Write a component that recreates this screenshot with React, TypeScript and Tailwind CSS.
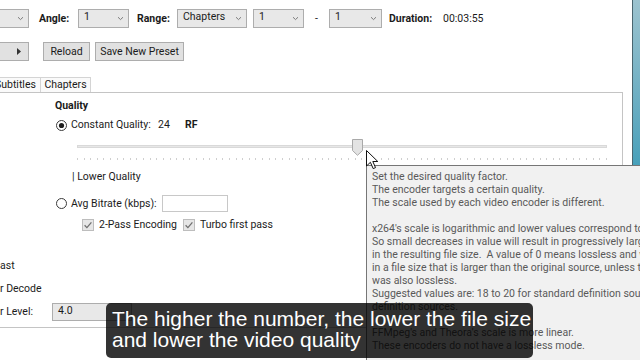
import React from "react";

const Chevron = () => (
  <svg width="7" height="5" viewBox="0 0 7 5" className="shrink-0">
    <path d="M1 1.2 L3.5 3.6 L6 1.2" fill="none" stroke="#7c7c7c" strokeWidth="1" />
  </svg>
);

function Dropdown({ className, text }: { className: string; text?: string }) {
  return (
    <div
      className={`h-[19px] shrink-0 flex items-center justify-between border border-[#adadad] bg-[#e8e8e8] pl-[5px] pr-[4px] ${className}`}
    >
      <span className="leading-[12px] pb-[3px]">{text ?? ""}</span>
      <Chevron />
    </div>
  );
}

function Button({ className, children }: { className: string; children: React.ReactNode }) {
  return (
    <div
      className={`h-[19px] shrink-0 flex items-center justify-center border border-[#adadad] bg-[#e1e1e1] ${className}`}
    >
      {children}
    </div>
  );
}

const Radio = ({ checked }: { checked?: boolean }) => (
  <svg width="11" height="11" viewBox="0 0 11 11" className="shrink-0">
    <circle cx="5.5" cy="5.5" r="5" fill="#fff" stroke="#3a3a3a" strokeWidth="1" />
    {checked && <circle cx="5.5" cy="5.5" r="2.6" fill="#1e1e1e" />}
  </svg>
);

const Check = () => (
  <svg width="12" height="12" viewBox="0 0 12 12" className="shrink-0">
    <rect x="0.5" y="0.5" width="11" height="11" fill="#e6e6e6" stroke="#bdbdbd" />
    <path d="M2.6 6.2 L4.9 8.6 L9.4 3.3" fill="none" stroke="#707070" strokeWidth="1.3" />
  </svg>
);

const ticks = Array.from({ length: 81 }, (_, i) => i);

const tooltipText = `Set the desired quality factor.
The encoder targets a certain quality.
The scale used by each video encoder is different.

x264's scale is logarithmic and lower values correspond to higher quality.
So small decreases in value will result in progressively larger increases
in the resulting file size.  A value of 0 means lossless and will result
in a file size that is larger than the original source, unless the source
was also lossless.
Suggested values are: 18 to 20 for standard definition sources and 20 to 23 for high
definition sources.

FFMpeg's and Theora's scale is more linear.
These encoders do not have a lossless mode.`;

export default function App() {
  return (
    <div className="w-[640px] h-[360px] overflow-hidden relative bg-white flex font-['Roboto',sans-serif] text-[10.5px] text-[#1b1b1b]">
      <div className="w-[632px] h-full shrink-0 flex flex-col overflow-hidden">
        {/* Row 1 */}
        <div className="mt-[9px] h-[19px] flex items-center shrink-0">
          <Dropdown className="-ml-[30px] w-[59px]" />
          <span className="ml-[10px] w-[39px] font-bold">Angle:</span>
          <Dropdown className="w-[51px]" text="1" />
          <span className="ml-[8px] w-[40px] font-bold">Range:</span>
          <Dropdown className="w-[70px]" text="Chapters" />
          <Dropdown className="ml-[6px] w-[51px]" text="1" />
          <span className="w-[25px] text-center">-</span>
          <Dropdown className="w-[53px]" text="1" />
          <span className="ml-[7px] w-[54px] font-bold">Duration:</span>
          <span>00:03:55</span>
        </div>

        {/* Row 2 */}
        <div className="mt-[14px] h-[19px] flex items-center shrink-0">
          <Button className="-ml-[30px] w-[59px] !justify-end pr-[7px]">
            <svg width="4" height="7" viewBox="0 0 4 7">
              <path d="M0 0 L4 3.5 L0 7 Z" fill="#333" />
            </svg>
          </Button>
          <Button className="ml-[14px] w-[47px]">Reload</Button>
          <Button className="ml-[5px] w-[89px]">Save New Preset</Button>
        </div>

        {/* Tabs */}
        <div className="mt-[16px] h-[15px] flex items-end shrink-0">
          <div className="-ml-[12px] w-[53px] h-[15px] pl-[6px] flex items-center border-t border-x border-[#d4d4d4] bg-[#fafafa]">
            Subtitles
          </div>
          <div className="w-[50px] h-[15px] flex items-center justify-center border-t border-r border-[#d4d4d4] bg-[#fafafa]">
            Chapters
          </div>
        </div>

        {/* Panel */}
        <div className="-ml-[1px] w-[624px] h-[236px] shrink-0 border border-[#c4c4c4] flex flex-col">
          <div className="mt-[6px] ml-[55px] h-[14px] leading-[14px] font-bold">Quality</div>

          <div className="mt-[5px] h-[14px] flex items-center">
            <div className="ml-[56px]">
              <Radio checked />
            </div>
            <span className="ml-[4px] w-[87px]">Constant Quality:</span>
            <span className="w-[27px]">24</span>
            <span className="font-bold">RF</span>
          </div>

          {/* Slider */}
          <div className="mt-[7px] ml-[77px] w-[530px] h-[24px] relative">
            <div className="mt-[6px] h-[3px] bg-[#e7e7e7] border border-[#d9d9d9]" />
            <div className="mt-[10px] h-[2px] flex justify-between">
              {ticks.map((i) => (
                <div key={i} className="w-[1px] h-[2px] bg-[#cfcfcf]" />
              ))}
            </div>
            <svg width="11" height="17" viewBox="0 0 11 17" className="absolute left-[275px] top-[0px]">
              <path d="M0.5 0.5 H10.5 V11.5 L5.5 16.3 L0.5 11.5 Z" fill="#e3e3e3" stroke="#a9a9a9" />
            </svg>
          </div>

          <div className="mt-[7px] ml-[72px] h-[14px] leading-[14px]">| Lower Quality</div>

          <div className="mt-[11px] h-[17px] flex items-center">
            <div className="ml-[56px]">
              <Radio />
            </div>
            <span className="ml-[4px] w-[91px]">Avg Bitrate (kbps):</span>
            <div className="w-[66px] h-[17px] border border-[#c8c8c8] bg-white" />
          </div>

          <div className="mt-[6px] h-[14px] flex items-center">
            <div className="ml-[82px]">
              <Check />
            </div>
            <span className="ml-[5px] w-[84px]">2-Pass Encoding</span>
            <Check />
            <span className="ml-[5px]">Turbo first pass</span>
          </div>

          <div className="mt-[27px] h-[14px] leading-[14px]">ast</div>
          <div className="mt-[9px] h-[14px] leading-[14px]">r Decode</div>
          <div className="mt-[7px] h-[18px] flex items-center">
            <span className="w-[52px]">r Level:</span>
            <Dropdown className="w-[80px] !h-[18px]" text="4.0" />
          </div>
        </div>
      </div>

      {/* Desktop strip */}
      <div className="w-[8px] h-full shrink-0 border-l border-[#4a6670] bg-gradient-to-b from-[#9cc3cf] via-[#3d9db8] to-[#0c7391]" />

      {/* Tooltip */}
      <div className="absolute left-[366px] top-[165px] w-[300px] h-[210px] bg-[#f1f1f1] border border-[#767676] text-[#595959] pl-[5px] pt-[4px] leading-[13px] whitespace-pre overflow-hidden">
        {tooltipText}
      </div>

      {/* Mouse cursor */}
      <svg width="13" height="20" viewBox="0 0 13 20" className="absolute left-[366px] top-[150px]">
        <path
          d="M0.5 0.5 L0.5 16 L4.4 12.3 L7.2 18.6 L9.5 17.6 L6.8 11.5 L11.8 11.5 Z"
          fill="#fff"
          stroke="#111"
          strokeWidth="1"
          strokeLinejoin="round"
        />
      </svg>

      {/* Subtitle */}
      <div className="absolute left-[106px] top-[303px] w-[427px] h-[55px] rounded-[5px] bg-black/80 text-white font-['Liberation_Sans',Arial,sans-serif] text-[21px] leading-[21px] pl-[6px] pt-[5px]">
        <div>The higher the number, the lower the file size</div>
        <div>and lower the video quality</div>
      </div>
    </div>
  );
}
